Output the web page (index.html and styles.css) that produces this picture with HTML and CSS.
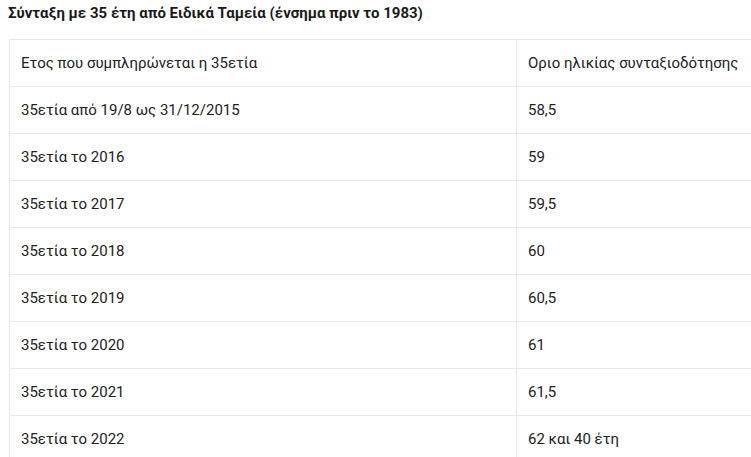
FILE: index.html
```html
<!DOCTYPE html>
<html lang="el">
<head>
<meta charset="utf-8">
<link rel="stylesheet" href="styles.css">
</head>
<body>
<h3 class="title">Σύνταξη με 35 έτη από Ειδικά Ταμεία (ένσημα πριν το 1983)</h3>
<table class="tbl">
<tr><td class="c1">Ετος που συμπληρώνεται η 35ετία</td><td class="c2">Οριο ηλικίας συνταξιοδότησης</td></tr>
<tr><td class="c1">35ετία από 19/8 ως 31/12/2015</td><td class="c2">58,5</td></tr>
<tr><td class="c1">35ετία το 2016</td><td class="c2">59</td></tr>
<tr><td class="c1">35ετία το 2017</td><td class="c2">59,5</td></tr>
<tr><td class="c1">35ετία το 2018</td><td class="c2">60</td></tr>
<tr><td class="c1">35ετία το 2019</td><td class="c2">60,5</td></tr>
<tr><td class="c1">35ετία το 2020</td><td class="c2">61</td></tr>
<tr><td class="c1">35ετία το 2021</td><td class="c2">61,5</td></tr>
<tr><td class="c1">35ετία το 2022</td><td class="c2">62 και 40 έτη</td></tr>
</table>
</body>
</html>
```
FILE: styles.css
```css
html, body {
  margin: 0;
  padding: 0;
  background: #fff;
  overflow: hidden;
}
body {
  padding: 0 0 0 8px;
  font-family: Roboto, "Noto Sans", sans-serif;
  color: #222;
}
.title {
  margin: 0;
  padding-top: 4px;
  font-size: 15px;
  line-height: 18px;
  font-weight: 700;
  color: #1a1a1a;
}
.tbl {
  margin: 17px 0 0 1px;
  border-collapse: collapse;
  width: 760px;
  table-layout: fixed;
  font-size: 15px;
}
.tbl td {
  border: 1px solid #e8e8e8;
  height: 46px;
  padding: 0 11px;
  vertical-align: middle;
  white-space: nowrap;
}
.c1 { width: 484px; }
```
